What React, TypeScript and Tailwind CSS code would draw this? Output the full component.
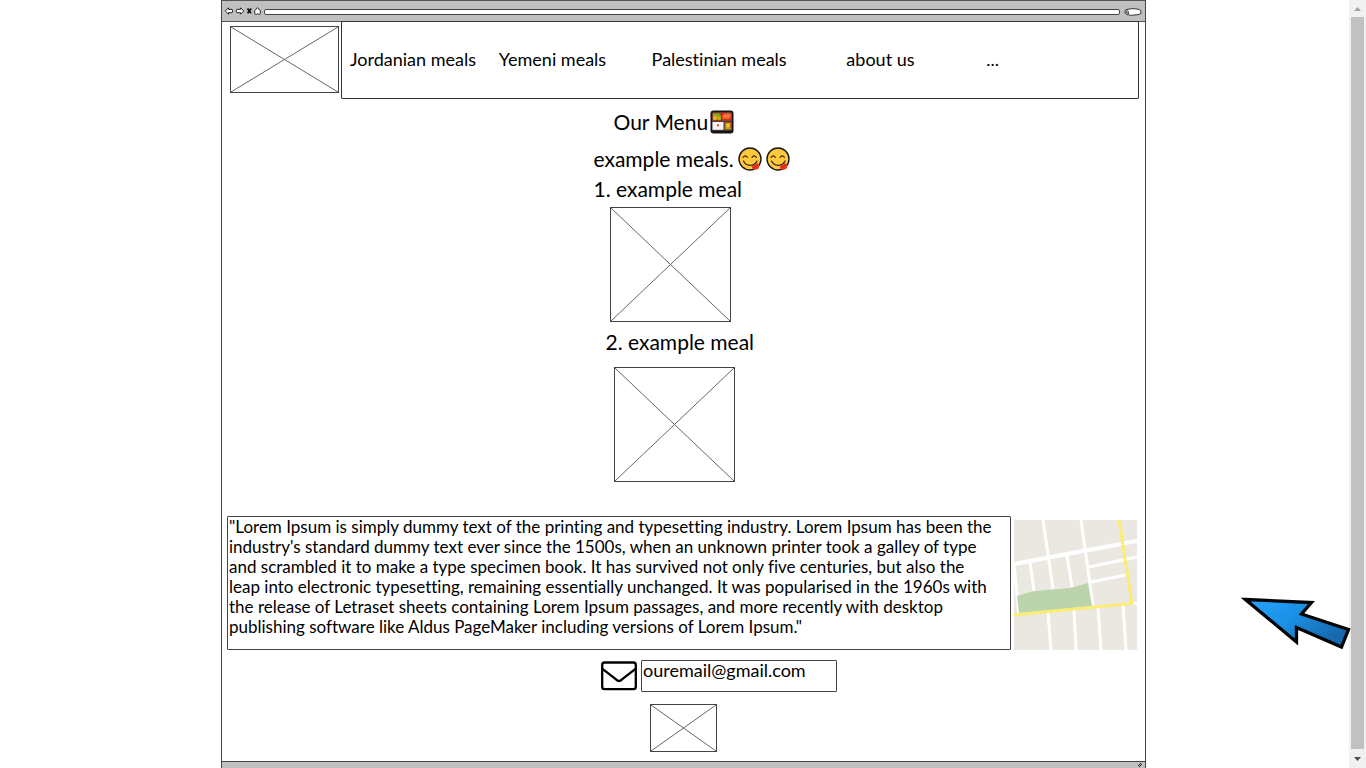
import type { ReactNode } from "react";

const navItems = ["Jordanian meals", "Yemeni meals", "Palestinian meals", "about us", "..."];

const aboutLines = [
  "\"Lorem Ipsum is simply dummy text of the printing and typesetting industry. Lorem Ipsum has been the",
  "industry's standard dummy text ever since the 1500s, when an unknown printer took a galley of type",
  "and scrambled it to make a type specimen book. It has survived not only five centuries, but also the",
  "leap into electronic typesetting, remaining essentially unchanged. It was popularised in the 1960s with",
  "the release of Letraset sheets containing Lorem Ipsum passages, and more recently with desktop",
  "publishing software like Aldus PageMaker including versions of Lorem Ipsum.\"",
];

function Placeholder({ className, label }: { className: string; label: string }) {
  return (
    <svg role="img" aria-label={label} className={`block border border-[#444] ${className}`} viewBox="0 0 100 100" preserveAspectRatio="none">
      <path d="M0 0L100 100M100 0L0 100" stroke="#666" strokeWidth="1" vectorEffect="non-scaling-stroke" fill="none" />
    </svg>
  );
}

function ToolButton({ label, children }: { label: string; children: ReactNode }) {
  return (
    <button type="button" aria-label={label} className="flex shrink-0 items-center">
      {children}
    </button>
  );
}

function TitleBar() {
  return (
    <header className="flex h-[22px] items-center border-y border-[#555] bg-[#c0c0c0] pr-[3px] pl-[2px]">
      <div className="flex w-10 shrink-0 items-center gap-px">
        <ToolButton label="Back">
          <svg width="10" height="8" viewBox="0 0 9 8"><path d="M.8 4L4 .8V2.3H7.6L8.2 3V5L7.6 5.7H4V7.2Z" fill="#fff" stroke="#222" /></svg>
        </ToolButton>
        <ToolButton label="Forward">
          <svg width="10" height="8" viewBox="0 0 9 8"><path d="M8.2 4L5 .8V2.3H1.4L.8 3V5L1.4 5.7H5V7.2Z" fill="#fff" stroke="#222" /></svg>
        </ToolButton>
        <ToolButton label="Stop">
          <svg width="7" height="8" viewBox="0 0 7 8"><path d="M1.5 1.5L5 6.3M5.2 1.5L1.6 6.3" stroke="#111" strokeWidth="1.8" /></svg>
        </ToolButton>
        <ToolButton label="Home">
          <svg width="7" height="8" viewBox="0 0 7 8"><path d="M3.5 .6L6.3 3.7V6.3L5.8 7.3H4.2L3.5 6.5L2.8 7.3H1.2L.7 6.3V3.7Z" fill="#fff" stroke="#222" /></svg>
        </ToolButton>
      </div>
      <input aria-label="Address" className="mt-[2px] h-[6px] min-w-0 flex-1 rounded-[2px] border border-[#444] bg-white px-1 text-[4px] outline-none" />
      <button type="button" aria-label="Search" className="mt-[2px] ml-1 shrink-0">
        <svg className="block" width="18" height="8" viewBox="0 0 18 8">
          <path d="M4 1.2Q9 .1 14 1.1L16.8 2.5L17 5.5Q15 7 9 7.2Q3 7.4 1.2 5.4Q.4 3 1.6 1.8Z" fill="#fff" stroke="#333" />
          <circle cx="3.2" cy="4" r="1.2" fill="none" stroke="#333" />
          <path d="M3.8 4.8L5 6" stroke="#333" />
        </svg>
      </button>
    </header>
  );
}

function Bento() {
  return (
    <svg role="img" aria-label="bento box" className="h-6 w-6 shrink-0" viewBox="0 0 24 24">
      <rect x=".5" y=".5" width="23" height="23" rx="3" fill="#151515" />
      <rect x="2" y="2" width="20" height="18.8" rx="1.5" fill="#45413e" />
      <rect x="2.5" y="2.8" width="8.8" height="8" fill="#c7321b" />
      <path d="M3 3.5H9L11 6V10H3Z" fill="#81b01a" />
      <circle cx="5" cy="8" r="1.9" fill="#ffae16" />
      <circle cx="9" cy="8.3" r="1.4" fill="#ef9d18" />
      <rect x="11.8" y="2.8" width="9.8" height="8" fill="#c7321b" />
      <path d="M12.3 7Q13 3.8 16 3.5H20L21 6.5L19 9H13Z" fill="#f4642f" />
      <path d="M13.5 6.7L15 4.8M15.7 7L17.2 4.8M18 7L19.6 5" stroke="#ff9468" strokeWidth=".8" />
      <rect x="2.5" y="12" width="11" height="7.8" fill="#f5f4f6" />
      <circle cx="8" cy="15.3" r="1.1" fill="#ec2b1d" />
      <rect x="14.5" y="12" width="7.1" height="7.8" fill="#d93416" />
      <path d="M15.5 13H20.5L20 16L21 19.3H15.5Z" fill="#83bd20" />
      <path d="M17 13.8H20L19 17.2L16.2 17Z" fill="#ffcb32" />
    </svg>
  );
}

function YumFace() {
  return (
    <svg role="img" aria-label="face savoring food" className="h-6 w-6 shrink-0" viewBox="0 0 24 24">
      <circle cx="12" cy="12" r="11" fill="#ffc83d" stroke="#181715" strokeWidth="1.4" />
      <path d="M5 10.5Q7.2 7.2 9.4 10.5M14 10.5Q16.2 7.2 18.4 10.5" fill="none" stroke="#2b2118" strokeWidth="1.1" strokeLinecap="round" />
      <path d="M14 18.5Q17.5 18.2 19 15.8Q22.2 18.5 20.6 21.4Q17.5 24 14.4 21.8Q13.4 20.5 14 18.5Z" fill="#ee341e" />
      <path d="M16.5 21Q18.3 20 18.7 18.5" fill="none" stroke="#ac2016" strokeWidth=".7" />
      <path d="M5.5 14Q7.6 18.4 12.2 18.3Q16.8 18.2 19 14" fill="none" stroke="#2b2118" strokeWidth="1.2" strokeLinecap="round" />
    </svg>
  );
}

function StreetMap() {
  return (
    <svg role="img" aria-label="Map" className="mt-1 block h-[130px] w-[123px] shrink-0" viewBox="0 0 123 130">
      <rect width="123" height="130" fill="#ebe8e1" />
      <g fill="none" stroke="#fff" strokeWidth="3">
        <path d="M0 44L123 21" strokeWidth="4" />
        <path d="M29 0L39 69M67 0L79 86" />
        <path d="M16 43L20 71M53 35L58 67M75 47L123 37M77 62L112 55" />
        <path d="M0 44L5 95M34 92L37 130M60 90L62 130M84 88L87 130M109 85L112 130M116 84L123 83" />
      </g>
      <path d="M3 76L20 71L57 68L74 63L78 86L5 93Z" fill="#bcd4ac" />
      <path d="M0 95L118 83.5L105 0" fill="none" stroke="#faed72" strokeWidth="3" />
    </svg>
  );
}

function Envelope() {
  return (
    <svg aria-hidden="true" className="h-[30px] w-9 shrink-0" viewBox="0 0 36 30">
      <rect x="1.2" y="1.5" width="33.6" height="26.7" rx="2.4" fill="#fff" stroke="#000" strokeWidth="2.3" />
      <path d="M1.5 7.8L15 18.4Q18 21.6 21 18.4L34.5 7.8" fill="none" stroke="#000" strokeWidth="2.3" />
    </svg>
  );
}

function Scrollbar() {
  return (
    <div aria-hidden="true" className="absolute inset-y-0 right-0 flex w-[17px] flex-col items-center bg-[#f1f1f1]">
      <svg className="h-[17px] w-[17px] shrink-0" viewBox="0 0 17 17"><path d="M5 11L8.5 7L12 11Z" fill="#a3a3a3" /></svg>
      <div className="w-[13px] flex-1 bg-[#c1c1c1]" />
      <svg className="h-[19px] w-[17px] shrink-0" viewBox="0 0 17 19"><path d="M5 8L8.5 12L12 8Z" fill="#505050" /></svg>
    </div>
  );
}

function Pointer() {
  return (
    <svg aria-hidden="true" className="absolute right-[14px] bottom-[118px] h-[54px] w-[112px]" viewBox="0 0 112 54">
      <defs>
        <linearGradient id="pointerFill" x1="0" y1="0" x2="1" y2=".5">
          <stop offset="0" stopColor="#25a3ff" />
          <stop offset=".5" stopColor="#1b91e6" />
          <stop offset="1" stopColor="#1769ae" />
        </linearGradient>
      </defs>
      <path d="M5.5 3.5L71.5 6.5L61.5 18L108.5 33.5L101.5 51L56.5 31.5V46Z" fill="url(#pointerFill)" stroke="#050505" strokeWidth="3.3" />
    </svg>
  );
}

export default function App() {
  return (
    <div className="relative grid min-h-screen grid-cols-[221fr_925fr_220fr] bg-white font-['Lato','Noto_Sans',sans-serif] text-lg leading-5 text-black [font-variant-ligatures:none]">
      <div className="col-start-2 flex min-w-0 flex-col border-x border-[#444]">
        <TitleBar />

        <div className="-mt-px flex pr-[6px] pl-2">
          <Placeholder label="Restaurant logo" className="mt-[5px] mr-[2px] h-[67px] w-[109px] shrink-0" />
          <nav aria-label="Main" className="grid h-[78px] flex-1 grid-cols-[149fr_153fr_195fr_140fr_152fr] items-center rounded-[1px] border border-[#333] pb-[2px] pl-2">
            {navItems.map((item) => (
              <a key={item} href="#menu" className="whitespace-nowrap">{item}</a>
            ))}
          </nav>
        </div>

        <main id="menu" className="flex flex-1 flex-col">
          <section className="mx-auto w-[212px] pt-[9px] pl-4 text-[21px] leading-7 whitespace-nowrap">
            <h1 className="flex items-center gap-[2px] pl-5">Our Menu<Bento /></h1>
            <h2 className="mt-[9px] flex items-center gap-1">example meals.<YumFace /><YumFace /></h2>
            <ol>
              <li className="mt-[2px]">
                1. example meal
                <Placeholder label="Example meal 1" className="mt-1 ml-4 h-[115px] w-[121px]" />
              </li>
              <li className="mt-[6px]">
                <span className="block pl-3">2. example meal</span>
                <Placeholder label="Example meal 2" className="mt-[11px] ml-5 h-[115px] w-[121px]" />
              </li>
            </ol>
          </section>

          <section className="mt-[34px] flex gap-[3px] pr-2 pl-[5px]">
            <p className="min-h-[134px] min-w-0 flex-1 rounded-[1px] border border-[#444] pl-px text-[17px] whitespace-nowrap">
              {aboutLines.map((line) => (
                <span key={line} className="block">{line}</span>
              ))}
            </p>
            <StreetMap />
          </section>
        </main>

        <footer className="flex flex-col items-center pt-[9px] pb-[9px]">
          <div className="ml-[71px] flex items-center gap-1">
            <label htmlFor="email" aria-label="Email"><Envelope /></label>
            <input id="email" type="email" defaultValue="ouremail@gmail.com" className="h-8 w-[196px] rounded-[1px] border border-[#444] pb-3 pl-px leading-[18px] outline-none" />
          </div>
          <Placeholder label="Footer picture" className="mt-3 h-12 w-[67px]" />
        </footer>
        <div className="flex h-[7px] justify-end border-t border-[#444] bg-[#c0c0c0] pr-[2px]">
          <svg aria-hidden="true" className="h-[6px] w-[6px]" viewBox="0 0 6 6"><path d="M1 4L4 1M2 5L5 2" stroke="#222" /></svg>
        </div>
      </div>

      <Scrollbar />
      <Pointer />
    </div>
  );
}
